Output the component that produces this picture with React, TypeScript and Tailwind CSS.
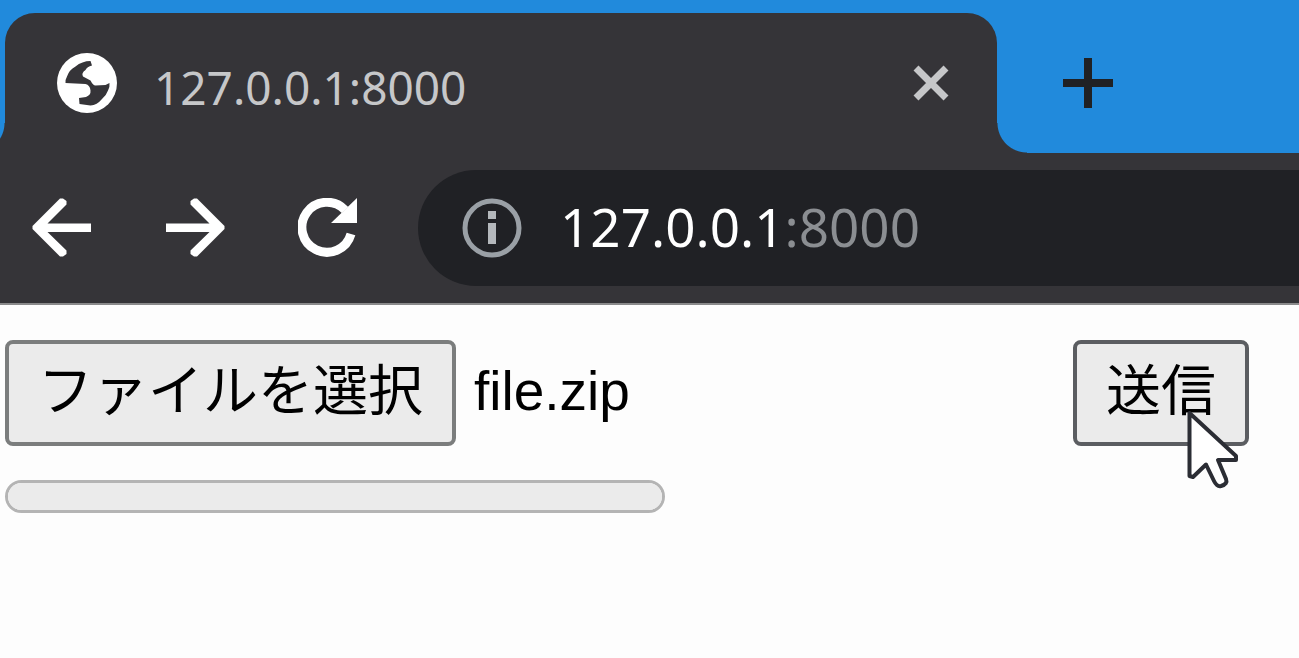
import React, { useRef, useState } from 'react';

const GlobeIcon = () => (
    <svg viewBox="0 0 60 60" className="size-[60px] shrink-0" aria-hidden="true">
        <circle cx="30" cy="30" r="30" fill="#fff" />
        <path
            fill="#353438"
            d="M33.500 8L35 12.500Q30 13.500 28.500 17Q24 20 26 23.500L33.500 27.500Q36 32.500 38.500 32.500L48.500 32L52.500 30Q53 34 51 37.500Q49 43 45 46Q40 52 33.500 52.500L22.500 51L22 45L29 44Q34 42 33.500 37.500Q33 32 28.500 31L8.500 30Q8 27 10 23.500Q12 17 18.500 13.500Q25 8 33.500 8Z"
        />
    </svg>
);

const CloseIcon = () => (
    <svg viewBox="0 0 36 36" className="size-9" aria-hidden="true">
        <path d="M3 3L33 33M33 3L3 33" stroke="#c6c7c9" strokeWidth="7" />
    </svg>
);

const PlusIcon = () => (
    <svg viewBox="0 0 50 50" className="size-[50px]" aria-hidden="true">
        <path d="M25 0V50M0 25H50" stroke="#202124" strokeWidth="8" />
    </svg>
);

const ArrowIcon = ({ className = '' }: { className?: string }) => (
    <svg viewBox="0 0 60 60" className={`size-[60px] ${className}`} aria-hidden="true">
        <path
            fill="#fff"
            d="M59 25.500H15.500L34.500 6.500V3L31 .5H28L.5 28V31L28 58.500H31L34.500 56V52.500L15.500 34H59Z"
        />
    </svg>
);

const ReloadIcon = () => (
    <svg viewBox="0 0 60 60" className="size-[60px]" aria-hidden="true">
        <path d="M53 36A25 25 0 1 1 47 12" fill="none" stroke="#fff" strokeWidth="9" />
        <path d="M59 0V25H33Z" fill="#fff" />
    </svg>
);

const InfoIcon = () => (
    <svg viewBox="0 0 60 60" className="size-[60px] shrink-0" aria-hidden="true">
        <circle cx="30" cy="30" r="27" fill="none" stroke="#9aa0a6" strokeWidth="5" />
        <path d="M26 13H34V21H26ZM26 25H34V46H26Z" fill="#b4b8bc" />
    </svg>
);

const Cursor = () => (
    <svg viewBox="0 0 54 80" className="pointer-events-none absolute left-[114px] top-[70px] h-20 w-[54px]" aria-hidden="true">
        <path
            d="M2.500 3V66L6 67L19 54.500L27 71Q30 77 34 76Q41 74 39 69L31 50H49L49 46Z"
            fill="#fff"
            stroke="#2b2d34"
            strokeWidth="4"
            strokeLinejoin="round"
        />
    </svg>
);

const TabStrip: React.FC = () => (
    <div className="flex bg-[#218adc] pt-[13px]">
        <div className="h-[30px] w-[5px] shrink-0 self-end bg-[radial-gradient(circle_at_-25px_0px,transparent_29px,#353438_30px)]" />
        <div className="flex h-[140px] w-[992px] items-center rounded-t-[30px] bg-[#353438] pl-[52px] pr-12">
            <GlobeIcon />
            <span className="ml-[37px] flex-1 pt-2 text-[46px] leading-none text-[#c6c7c9]">127.0.0.1:8000</span>
            <button aria-label="Close tab">
                <CloseIcon />
            </button>
        </div>
        <div className="size-[30px] shrink-0 self-end bg-[radial-gradient(circle_at_30px_0px,transparent_29px,#353438_30px)]" />
        <button aria-label="New tab" className="ml-9 self-center">
            <PlusIcon />
        </button>
    </div>
);

const Toolbar: React.FC = () => {
    const [url, setUrl] = useState('127.0.0.1:8000');

    return (
        <div className="flex items-center border-b-2 border-[#8a8a8b] bg-[#353438] py-[17px] pl-8">
            <div className="flex shrink-0 gap-[73px]">
                <button aria-label="Back">
                    <ArrowIcon />
                </button>
                <button aria-label="Forward">
                    <ArrowIcon className="-scale-x-100" />
                </button>
                <button aria-label="Reload">
                    <ReloadIcon />
                </button>
            </div>
            <div className="ml-[60px] flex h-[116px] min-w-0 flex-1 items-center rounded-l-full bg-[#202125] pl-11">
                <InfoIcon />
                {/* the host is white, the port is dimmed */}
                <input
                    aria-label="Address"
                    value={url}
                    onChange={e => setUrl(e.target.value)}
                    className="ml-[38px] h-20 min-w-0 flex-1 bg-[linear-gradient(90deg,#fff_222px,#8b8e92_222px)] bg-clip-text pb-1 text-[53px] text-transparent outline-none"
                />
            </div>
        </div>
    );
};

const UploadForm: React.FC = () => {
    const fileInput = useRef<HTMLInputElement>(null);
    const [fileName, setFileName] = useState('file.zip');

    return (
        <form
            className="pl-[5px] pr-[50px] pt-[35px] font-['Liberation_Sans','Noto_Sans_CJK_JP',sans-serif] text-[55px] leading-[90px] text-black"
            onSubmit={e => e.preventDefault()}
        >
            <div className="flex items-start">
                <div className="flex flex-1 items-center gap-[18px]">
                    <button
                        type="button"
                        onClick={() => fileInput.current?.click()}
                        className="h-[106px] rounded-lg border-4 border-[#7b7d7d] bg-[#ebebeb] px-[29px] pb-1"
                    >
                        ファイルを選択
                    </button>
                    <input
                        ref={fileInput}
                        type="file"
                        hidden
                        aria-label="ファイルを選択"
                        onChange={e => setFileName(e.target.files?.[0]?.name ?? '')}
                    />
                    <span className="pb-1">{fileName}</span>
                </div>
                <div className="relative">
                    <button
                        type="submit"
                        className="h-[106px] rounded-lg border-4 border-[#5b5d61] bg-[#ebebeb] px-[29px] pb-1"
                    >
                        送信
                    </button>
                    <Cursor />
                </div>
            </div>
            <progress
                value={0}
                max={100}
                aria-label="Upload progress"
                className="mt-[34px] block h-[33px] w-[660px] appearance-none overflow-hidden rounded-full border-3 border-[#b4b4b4] bg-[#ebebeb] [&::-webkit-progress-bar]:bg-[#ebebeb]"
            />
        </form>
    );
};

const App: React.FC = () => {
    return (
        <div className="min-h-screen bg-[#fdfdfd] font-['Noto_Sans',sans-serif]">
            <TabStrip />
            <Toolbar />
            <UploadForm />
        </div>
    );
};

export default App;
